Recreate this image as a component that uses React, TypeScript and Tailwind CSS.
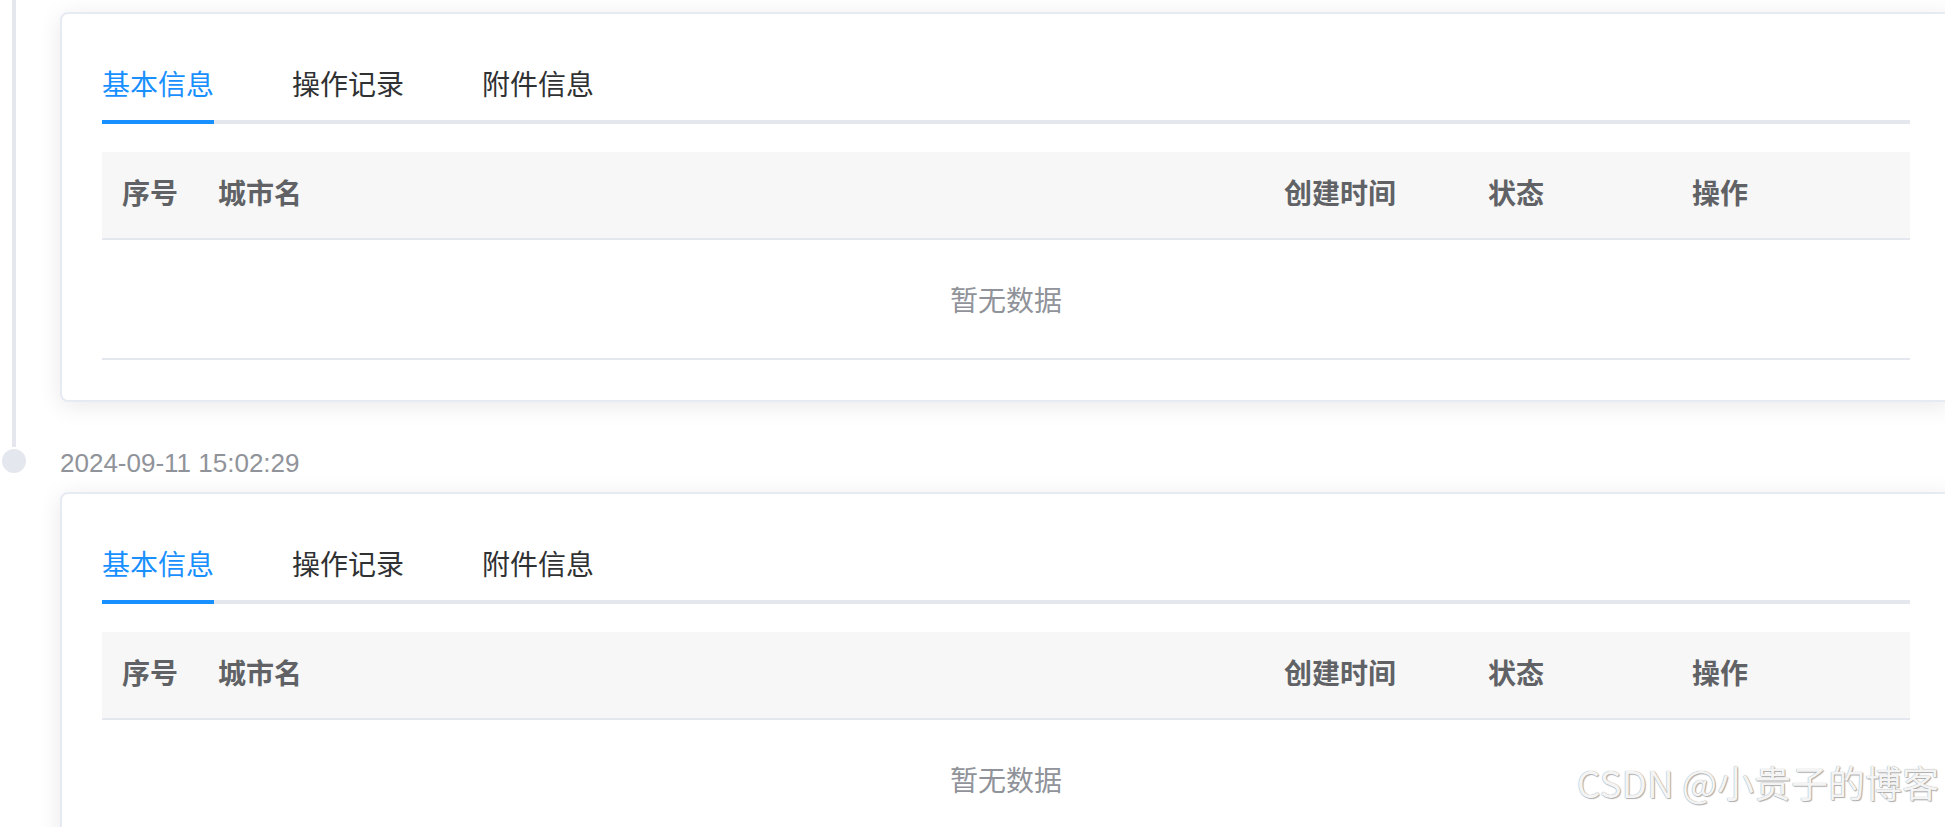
import React from "react";

const tabs = ["基本信息", "操作记录", "附件信息"];

const columns = [
  { label: "序号", className: "w-[96px]" },
  { label: "城市名", className: "flex-1" },
  { label: "创建时间", className: "w-[204px]" },
  { label: "状态", className: "w-[204px]" },
  { label: "操作", className: "w-[238px]" },
];

function RecordCard() {
  return (
    <div className="w-[1892px] shrink-0 rounded-[8px] border-2 border-[#e6eaf2] bg-white px-[40px] pt-[30px] pb-[40px] shadow-[0_4px_24px_rgba(0,0,0,0.09)]">
      <div className="flex h-[80px] gap-[78px] border-b-[4px] border-[#e4e7ed]">
        {tabs.map((tab, index) => (
          <div
            key={tab}
            className={
              index === 0
                ? "-mb-[4px] flex h-[80px] items-center border-b-[4px] border-[#1890ff] pt-[8px] text-[28px] text-[#1890ff]"
                : "-mb-[4px] flex h-[80px] items-center border-b-[4px] border-transparent pt-[8px] text-[28px] text-[#303133]"
            }
          >
            {tab}
          </div>
        ))}
      </div>

      <div className="mt-[28px]">
        <div className="flex h-[88px] items-center border-b-2 border-[#e4e7ed] bg-[#f7f7f7] text-[28px] font-bold text-[#606266]">
          {columns.map((col) => (
            <div key={col.label} className={`${col.className} px-[20px]`}>
              {col.label}
            </div>
          ))}
        </div>
        <div className="flex h-[120px] items-center justify-center border-b-2 border-[#e4e7ed] pt-[5px] text-[28px] text-[#909399]">
          暂无数据
        </div>
      </div>
    </div>
  );
}

export default function App() {
  return (
    <div className="relative h-[827px] w-[1945px] overflow-hidden bg-white font-['Liberation_Sans','Noto_Sans_CJK_SC',sans-serif]">
      <ul className="pl-[4px]">
        <li className="relative pb-[45px]">
          <div className="absolute top-0 left-[8px] h-full w-[4px] bg-[#e4e7ed]" />
          <div className="pt-[12px] pl-[56px]">
            <RecordCard />
          </div>
        </li>

        <li className="relative">
          <div className="absolute top-[2px] left-[-2px] h-[24px] w-[24px] rounded-full bg-[#e4e7ed]" />
          <div className="pt-[3px] pl-[56px]">
            <div className="mb-[16px] h-[26px] text-[26px] leading-none text-[#909399]">
              2024-09-11 15:02:29
            </div>
            <RecordCard />
          </div>
        </li>
      </ul>

      <div className="absolute top-[764px] right-[6px] font-['Noto_Sans_CJK_SC',sans-serif] text-[37px] leading-none text-[#f4f4f4] [text-shadow:0_0_1px_#8c8c8c,1px_1px_1px_#b0b0b0]">
        CSDN @小贵子的博客
      </div>
    </div>
  );
}
